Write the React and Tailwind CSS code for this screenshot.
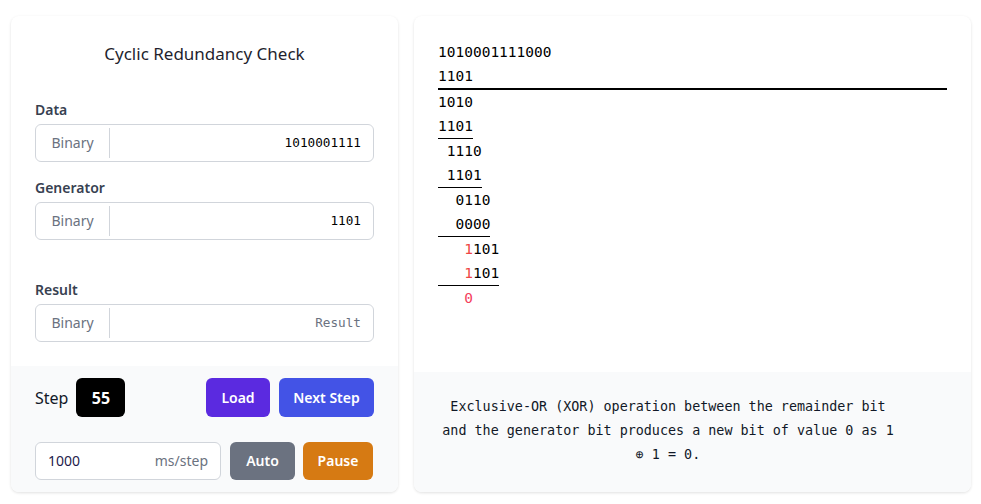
import React from "react";

const mono = "font-['DejaVu_Sans_Mono','Liberation_Mono',monospace]";

const BinaryField = ({ label, value, placeholder, className }) => {
  return (
    <div className={className}>
      <div className="text-sm font-semibold text-[#374151] leading-5 mb-1">{label}</div>
      <div className="flex h-[38px] rounded-md border border-[#d1d5db] bg-white">
        <div className="w-[74px] flex items-center justify-center text-sm text-[#6b7280] my-[3px] border-r border-[#d1d5db]">Binary</div>
        <input
          readOnly
          value={value}
          placeholder={placeholder}
          className={`flex-1 min-w-0 bg-transparent text-right pr-3 text-[12.7px] text-black placeholder:text-[#6b7280] outline-none ${mono}`}
        />
      </div>
    </div>
  );
};

const rows = [
  { text: "1010001111000" },
  { text: "1101", line: "thick" },
  { text: "1010" },
  { text: "1101", line: "thin" },
  { text: " 1110" },
  { text: " 1101", line: "thin" },
  { text: "  0110" },
  { text: "  0000", line: "thin" },
  { pad: "   ", red: "1", text: "101" },
  { pad: "   ", red: "1", text: "101", line: "thin" },
  { pad: "   ", zero: "0" },
];

const App = () => {
  return (
    <div className="w-[981px] h-[504px] bg-white font-['Noto_Sans','Open_Sans',sans-serif] pl-[11px] pr-[10px] pt-4 pb-3">
      <div className="grid grid-cols-[387px_1fr] gap-4 h-full">

        {/* left card */}
        <div className="flex flex-col rounded-lg bg-white shadow-[0_1px_3px_rgba(0,0,0,0.12)] overflow-hidden">
          <div className="flex-1 px-6 pt-6">
            <h1 className="text-center text-[17px] leading-7 text-[#1f1f2e] mb-8">Cyclic Redundancy Check</h1>
            <BinaryField label="Data" value="1010001111" />
            <BinaryField label="Generator" value="1101" className="mt-4" />
            <BinaryField label="Result" value="" placeholder="Result" className="mt-10" />
          </div>
          <div className="h-[126px] bg-[#f9fafb] px-6 pt-3">
            <div className="flex items-center h-[39px]">
              <span className="text-base text-[#111827] mr-2">Step</span>
              <div className="w-[49px] h-[39px] rounded-md bg-black text-white font-bold text-base flex items-center justify-center">55</div>
              <div className="flex-1" />
              <button className="w-[64px] h-[39px] rounded-md bg-[#5b2ae0] text-white text-sm font-semibold">Load</button>
              <button className="ml-[9px] w-[95px] h-[39px] rounded-md bg-[#4353e6] text-white text-sm font-semibold">Next Step</button>
            </div>
            <div className="flex items-center mt-[25px] h-[38px]">
              <div className="w-[186px] h-[38px] rounded-md border border-[#d1d5db] bg-white flex items-center px-3 text-sm">
                <span className="flex-1 text-[#1e1b4b]">1000</span>
                <span className="text-[#6b7280]">ms/step</span>
              </div>
              <button className="ml-[9px] w-[65px] h-[38px] rounded-md bg-[#6b7280] text-white text-sm font-semibold">Auto</button>
              <button className="ml-2 w-[70px] h-[38px] rounded-md bg-[#d67a13] text-white text-sm font-semibold">Pause</button>
            </div>
          </div>
        </div>

        {/* right card */}
        <div className="flex flex-col rounded-lg bg-white shadow-[0_1px_3px_rgba(0,0,0,0.12)] overflow-hidden">
          <div className={`flex-1 px-6 pt-6 flex flex-col items-start text-[14.5px] leading-6 text-black ${mono}`}>
            {rows.map((r, i) => (
              <div
                key={i}
                className={`whitespace-pre ${r.line === "thick" ? "self-stretch border-b-2 border-black" : ""} ${r.line === "thin" ? "border-b border-black" : ""}`}
              >
                {r.pad}
                {r.red && <span className="text-[#ef4444]">{r.red}</span>}
                {r.zero && <span className="text-[#f43f5e]">{r.zero}</span>}
                {r.text}
              </div>
            ))}
          </div>
          <div className="h-[120px] bg-[#f9fafb] pt-[23px] pl-6">
            <p className={`w-[460px] text-center text-[13.4px] leading-6 text-[#111827] ${mono}`}>
              Exclusive-OR (XOR) operation between the remainder bit and the generator bit produces a new bit of value 0 as 1 ⊕ 1 = 0.
            </p>
          </div>
        </div>

      </div>
    </div>
  );
};

export default App;
